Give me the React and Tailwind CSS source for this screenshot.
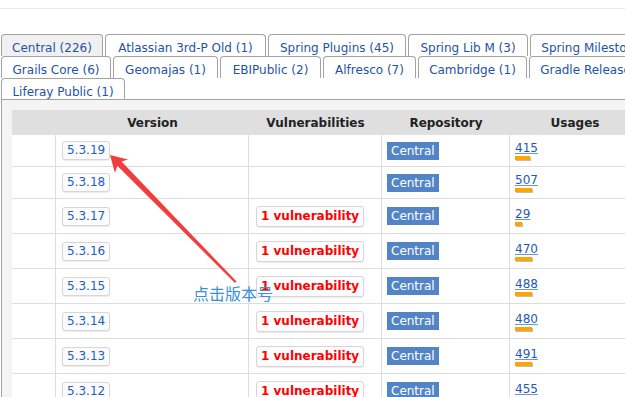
import React from "react";

const row1 = [
  ["Central (226)", 102, true],
  ["Atlassian 3rd-P Old (1)", 161],
  ["Spring Plugins (45)", 138],
  ["Spring Lib M (3)", 120],
  ["Spring Milestones (2)", 150],
];
const row2 = [
  ["Grails Core (6)", 110],
  ["Geomajas (1)", 105],
  ["EBIPublic (2)", 101],
  ["Alfresco (7)", 93],
  ["Cambridge (1)", 109],
  ["Gradle Releases (1)", 140],
];
const row3 = [["Liferay Public (1)", 124]];

const rows = [
  { v: "5.3.19", vuln: false, u: 415, w: 15 },
  { v: "5.3.18", vuln: false, u: 507, w: 17 },
  { v: "5.3.17", vuln: true, u: 29, w: 7 },
  { v: "5.3.16", vuln: true, u: 470, w: 17 },
  { v: "5.3.15", vuln: true, u: 488, w: 17 },
  { v: "5.3.14", vuln: true, u: 480, w: 17 },
  { v: "5.3.13", vuln: true, u: 491, w: 17 },
  { v: "5.3.12", vuln: true, u: 455, w: 16 },
];

function TabRow({ tabs }) {
  return (
    <div className="flex gap-[2px] h-[22px] whitespace-nowrap">
      {tabs.map(([label, w, sel]) => (
        <div
          key={label}
          style={{ width: w }}
          className={
            "shrink-0 h-[22px] border-t border-l border-r border-[#a3a3a3] rounded-t-[4px] text-center text-[12px] leading-[14px] pt-[6px] text-[#2453a6] overflow-hidden " +
            (sel ? "bg-[#f0f0f0]" : "bg-white")
          }
        >
          {label}
        </div>
      ))}
    </div>
  );
}

export default function App() {
  return (
    <div className="relative w-[625px] h-[397px] overflow-hidden bg-white font-['DejaVu_Sans',sans-serif]">
      <div className="h-[8px]" />
      <div className="h-px bg-[#e8e8e8]" />
      <div className="h-[25px]" />
      <div className="ml-px">
        <TabRow tabs={row1} />
        <TabRow tabs={row2} />
        <div className="h-[21px] overflow-hidden">
          <TabRow tabs={row3} />
        </div>
        <div className="border-t border-l border-[#a3a3a3] bg-[#f4f4f4] pt-[10px] pl-[10px] h-[400px]">
          <div className="w-[700px]">
            <div className="flex h-[25px] bg-[#dfdfdf] text-[12px] font-bold text-[#222] items-center">
              <div className="w-[44px] shrink-0" />
              <div className="w-[193px] shrink-0 text-center">Version</div>
              <div className="w-[133px] shrink-0 text-center">Vulnerabilities</div>
              <div className="w-[128px] shrink-0 text-center">Repository</div>
              <div className="w-[130px] shrink-0 text-center">Usages</div>
            </div>
            {rows.map((r) => (
              <div
                key={r.v}
                className={
                  "flex bg-white border-b border-[#dddddd] " +
                  (r.vuln ? "h-[35px]" : "h-[32px]")
                }
              >
                <div className="w-[44px] shrink-0 border-r border-[#dddddd]" />
                <div className="w-[193px] shrink-0 border-r border-[#dddddd] flex items-center pl-[6px]">
                  <span className="h-[19px] px-[4px] border border-[#d6d6d6] rounded-[3px] bg-[#fcfcff] shadow-[0_1px_1px_rgba(0,0,0,0.08)] text-[12px] leading-[17px] text-[#1b5fbe]">
                    {r.v}
                  </span>
                </div>
                <div className="w-[133px] shrink-0 border-r border-[#dddddd] flex items-center pl-[7px]">
                  {r.vuln && (
                    <span className="h-[21px] px-[4px] border border-[#d6d6d6] rounded-[3px] bg-[#fdfdff] shadow-[0_1px_1px_rgba(0,0,0,0.08)] text-[12px] leading-[19px] font-bold text-[#ff0000] whitespace-nowrap">
                      1 vulnerability
                    </span>
                  )}
                </div>
                <div className="w-[128px] shrink-0 border-r border-[#dddddd] flex items-center pl-[5px]">
                  <span className="h-[18px] px-[4px] bg-[#5384c6] text-white text-[12px] leading-[18px]">
                    Central
                  </span>
                </div>
                <div className="w-[130px] shrink-0 flex flex-col justify-center pl-[5px]">
                  <span className="text-[12px] leading-[14px] text-[#1d5ab8] underline decoration-[#6f95cf]">
                    {r.u}
                  </span>
                  <div
                    style={{ width: r.w }}
                    className="mt-[1px] h-[4px] bg-[#ffa500] shadow-[1px_1px_0_#bdbdbd]"
                  />
                </div>
              </div>
            ))}
          </div>
        </div>
      </div>

      <svg
        className="absolute left-0 top-0 pointer-events-none"
        width="625"
        height="397"
        viewBox="0 0 625 397"
      >
        <polygon
          points="110,155 128,159.5 121.5,161.5 236.5,281.5 235,283 117.3,165.7 115,173"
          fill="#f23d3d"
        />
      </svg>
      <div className="absolute left-[193px] top-[284px] text-[16px] leading-[18px] text-[#3a8ee0] font-['Noto_Sans_CJK_SC',sans-serif] whitespace-nowrap">
        点击版本号
      </div>
    </div>
  );
}
